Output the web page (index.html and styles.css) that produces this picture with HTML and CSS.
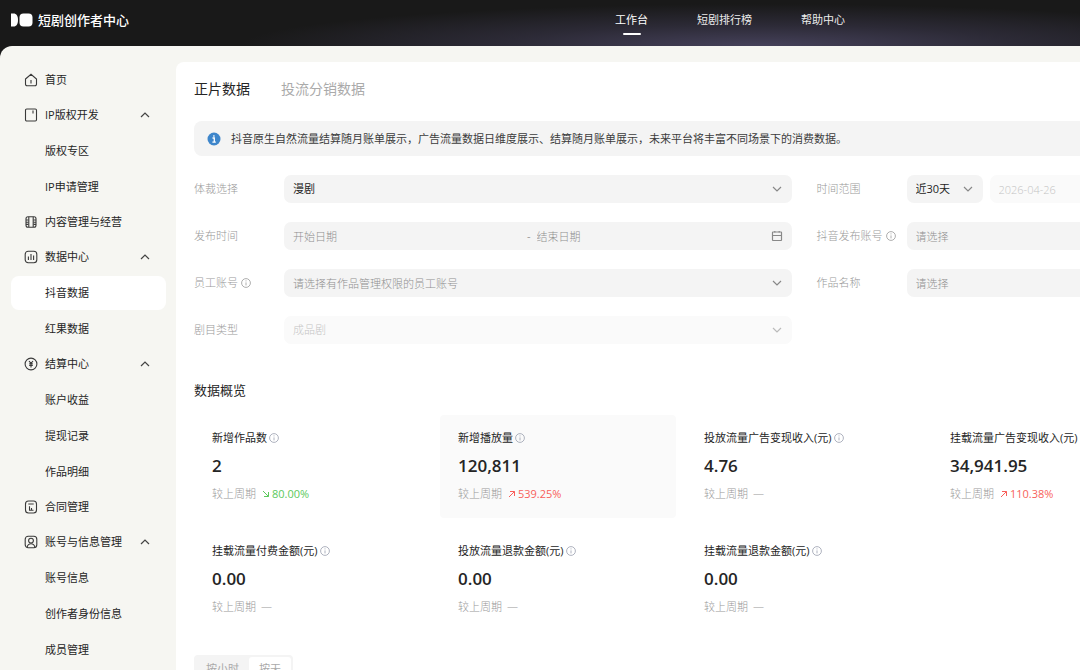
FILE: index.html
```html
<!DOCTYPE html>
<html lang="zh-CN">
<head>
<meta charset="utf-8">
<meta name="viewport" content="width=device-width, initial-scale=1">
<title>短剧创作者中心</title>
<link rel="stylesheet" href="styles.css">
</head>
<body>
<svg class="sprite" aria-hidden="true">
  <symbol id="up" viewBox="0 0 12 12"><path d="M2 8l4-4 4 4" /></symbol>
  <symbol id="down" viewBox="0 0 12 12"><path d="M2 4l4 4 4-4" /></symbol>
  <symbol id="info" viewBox="0 0 12 12"><circle cx="6" cy="6" r="4.4" /><path d="M6 5.4v3M6 3.4v1" /></symbol>
  <symbol id="rise" viewBox="0 0 10 10"><path d="M2 8l5.500-5.500M3 2.500h4.500V7" /></symbol>
  <symbol id="fall" viewBox="0 0 10 10"><path d="M2 2l5.500 5.500M7.500 3v4.500H3" /></symbol>
</svg>
<div class="page">
  <header class="topbar">
    <a class="brand" href="#">
      <svg class="brand-mark" viewBox="0 0 22 14" aria-hidden="true"><path d="M0 .5h2.5C5.500.5 7 3 7 7s-1.500 6.500-4.500 6.500H0z"/><rect x="8.500" y=".5" width="13" height="13" rx="4"/></svg>
      <span>短剧创作者中心</span>
    </a>
    <nav class="topnav" aria-label="主导航">
      <a class="topnav-link is-current" href="#">工作台</a>
      <a class="topnav-link" href="#">短剧排行榜</a>
      <a class="topnav-link" href="#">帮助中心</a>
    </nav>
  </header>
  <div class="shell">
    <nav class="sidebar" aria-label="侧边导航">
      <div class="group">
        <a class="item" href="#"><svg class="icon" viewBox="0 0 14 14"><path d="M1.500 6L7 1.300 12.500 6v5.200a1.500 1.500 0 0 1-1.500 1.500H3a1.500 1.500 0 0 1-1.500-1.500z"/><path d="M7 7v3.500"/></svg>首页</a>
      </div>
      <div class="group">
        <button class="item" type="button"><svg class="icon" viewBox="0 0 14 14"><rect x="1.500" y="1" width="11" height="12" rx="1.200"/><path d="M9 2.500V5.500"/></svg>IP版权开发<svg class="caret"><use href="#up"/></svg></button>
        <a class="item sub" href="#">版权专区</a>
        <a class="item sub" href="#">IP申请管理</a>
      </div>
      <div class="group">
        <a class="item" href="#"><svg class="icon" viewBox="0 0 14 14"><rect x="2" y="1.800" width="10" height="10.400" rx="2"/><path d="M4.800 2v10M9.200 2v10"/><path d="M2 5h2.500M2 7.200h2.500M2 9.400h2.500M9.500 5H12M9.500 7.200H12M9.500 9.400H12"/></svg>内容管理与经营</a>
      </div>
      <div class="group">
        <button class="item" type="button"><svg class="icon" viewBox="0 0 14 14"><rect x="1.200" y="1.200" width="11.600" height="11.600" rx="3"/><path d="M4.400 6.500V10M7 4v6M9.600 5.500V10"/></svg>数据中心<svg class="caret"><use href="#up"/></svg></button>
        <a class="item sub is-current" href="#">抖音数据</a>
        <a class="item sub" href="#">红果数据</a>
      </div>
      <div class="group">
        <button class="item" type="button"><svg class="icon" viewBox="0 0 14 14"><circle cx="7" cy="7" r="5.900"/><path d="M5 4l2 2.400L9 4M7 6.400v4M5.200 6.700h3.600M5.200 8.400h3.600"/></svg>结算中心<svg class="caret"><use href="#up"/></svg></button>
        <a class="item sub" href="#">账户收益</a>
        <a class="item sub" href="#">提现记录</a>
        <a class="item sub" href="#">作品明细</a>
      </div>
      <div class="group">
        <a class="item" href="#"><svg class="icon" viewBox="0 0 14 14"><rect x="1.500" y="1" width="11" height="12" rx="3"/><path d="M4.300 4h5.400M5.500 6.200v4h4M7.500 8v2"/></svg>合同管理</a>
      </div>
      <div class="group">
        <button class="item" type="button"><svg class="icon" viewBox="0 0 14 14"><rect x="1.200" y="1.200" width="11.600" height="11.600" rx="3"/><circle cx="7" cy="5.600" r="2.400"/><path d="M3.200 12c.5-2.200 2-3.300 3.800-3.300s3.300 1.100 3.800 3.300"/></svg>账号与信息管理<svg class="caret"><use href="#up"/></svg></button>
        <a class="item sub" href="#">账号信息</a>
        <a class="item sub" href="#">创作者身份信息</a>
        <a class="item sub" href="#">成员管理</a>
      </div>
    </nav>
    <main class="main">
      <div class="tabs">
        <button class="tab is-current" type="button">正片数据</button>
        <button class="tab" type="button">投流分销数据</button>
      </div>
      <p class="notice"><svg class="notice-icon" viewBox="0 0 14 14" aria-hidden="true"><circle cx="7" cy="7" r="6.500"/><path d="M5.500 6H7.300v4M5.400 10.200h3.400M6.900 3.200v1.500"/></svg>抖音原生自然流量结算随月账单展示，广告流量数据日维度展示、结算随月账单展示，未来平台将丰富不同场景下的消费数据。</p>

      <form class="filters">
        <div class="field">
          <label class="label" for="genre">体裁选择</label>
          <div class="control"><select class="input" id="genre"><option>漫剧</option></select><svg class="mark"><use href="#down"/></svg></div>
        </div>
        <div class="field">
          <label class="label" for="range">时间范围</label>
          <div class="pair">
            <div class="control control--short"><select class="input" id="range"><option>近30天</option></select><svg class="mark"><use href="#down"/></svg></div>
            <div class="control is-off"><input class="input" type="text" value="2026-04-26" aria-label="日期" disabled></div>
          </div>
        </div>
        <div class="field">
          <label class="label" for="start">发布时间</label>
          <div class="control">
            <input class="input" id="start" type="text" placeholder="开始日期"><span class="dash">-</span><input class="input input--end" type="text" placeholder="结束日期" aria-label="结束日期">
            <svg class="mark" viewBox="0 0 12 12"><rect x="1.500" y="2" width="9" height="8.500" rx=".5"/><path d="M1.500 5.500h9M3.800 1v1.500M8.200 1v1.500"/></svg>
          </div>
        </div>
        <div class="field">
          <label class="label" for="account">抖音发布账号<svg class="hint"><use href="#info"/></svg></label>
          <div class="control"><input class="input" id="account" type="text" placeholder="请选择"></div>
        </div>
        <div class="field">
          <label class="label" for="staff">员工账号<svg class="hint"><use href="#info"/></svg></label>
          <div class="control"><input class="input" id="staff" type="text" placeholder="请选择有作品管理权限的员工账号"><svg class="mark"><use href="#down"/></svg></div>
        </div>
        <div class="field">
          <label class="label" for="work">作品名称</label>
          <div class="control"><input class="input" id="work" type="text" placeholder="请选择"></div>
        </div>
        <div class="field">
          <label class="label" for="kind">剧目类型</label>
          <div class="control is-off"><select class="input" id="kind" disabled><option>成品剧</option></select><svg class="mark"><use href="#down"/></svg></div>
        </div>
      </form>

      <h2 class="heading">数据概览</h2>
      <section class="metrics">
        <article class="metric"><h3 class="name">新增作品数<svg class="hint"><use href="#info"/></svg></h3><p class="value">2</p><p class="delta">较上周期<span class="trend down"><svg class="arrow"><use href="#fall"/></svg>80.00%</span></p></article>
        <article class="metric is-active"><h3 class="name">新增播放量<svg class="hint"><use href="#info"/></svg></h3><p class="value">120,811</p><p class="delta">较上周期<span class="trend up"><svg class="arrow"><use href="#rise"/></svg>539.25%</span></p></article>
        <article class="metric"><h3 class="name">投放流量广告变现收入(元)<svg class="hint"><use href="#info"/></svg></h3><p class="value">4.76</p><p class="delta">较上周期<span>—</span></p></article>
        <article class="metric"><h3 class="name">挂载流量广告变现收入(元)<svg class="hint"><use href="#info"/></svg></h3><p class="value">34,941.95</p><p class="delta">较上周期<span class="trend up"><svg class="arrow"><use href="#rise"/></svg>110.38%</span></p></article>
        <article class="metric metric--first"><h3 class="name">挂载流量付费金额(元)<svg class="hint"><use href="#info"/></svg></h3><p class="value">0.00</p><p class="delta">较上周期<span>—</span></p></article>
        <article class="metric"><h3 class="name">投放流量退款金额(元)<svg class="hint"><use href="#info"/></svg></h3><p class="value">0.00</p><p class="delta">较上周期<span>—</span></p></article>
        <article class="metric"><h3 class="name">挂载流量退款金额(元)<svg class="hint"><use href="#info"/></svg></h3><p class="value">0.00</p><p class="delta">较上周期<span>—</span></p></article>
      </section>
      <div class="switch">
        <button class="switch-item" type="button">按小时</button>
        <button class="switch-item is-current" type="button">按天</button>
      </div>
    </main>
  </div>
</div>
</body>
</html>
```
FILE: styles.css
```css
* { box-sizing: border-box; }
body, h2, h3, p { margin: 0; }
body {
  height: 100vh;
  overflow: hidden;
  background: #191919;
  color: #252525;
  font: 400 11px/18px "Open Sans", "Noto Sans CJK SC", sans-serif;
}
a { color: inherit; text-decoration: none; }
button, input, select { font: inherit; color: inherit; border: 0; background: none; padding: 0; margin: 0; }
svg { flex: none; fill: none; stroke: currentColor; }
.sprite { position: absolute; width: 0; height: 0; }

/* The workspace keeps a desktop width; narrower windows show its left part. */
.page { min-width: 1460px; min-height: 100vh; display: flex; flex-direction: column; }

.topbar {
  display: grid;
  grid-template-columns: 1fr auto 1fr;
  align-items: start;
  height: 46px;
  padding: 0 11px;
  color: #fff;
  background: radial-gradient(ellipse 520px 42px at 760px 100%, #45415a, #2c2a36 50%, #191919) #191919;
}
.brand { display: flex; align-items: center; gap: 5px; height: 39px; font-size: 13px; font-weight: 500; }
.brand-mark { width: 22px; height: 14px; fill: #fff; stroke: none; }
.topnav { display: flex; gap: 49px; padding-top: 11px; }
.topnav-link { display: flex; flex-direction: column; align-items: center; gap: 4px; color: #ececec; }
.topnav-link.is-current { color: #fff; }
.topnav-link.is-current::after { content: ""; width: 18px; height: 2px; border-radius: 1px; background: #fff; }

.shell { flex: 1; display: flex; background: #f6f6f2; border-top-left-radius: 12px; }
.sidebar { width: 176px; flex: none; display: flex; flex-direction: column; gap: 1px; padding: 17px 10px 0 11px; }
.group { display: flex; flex-direction: column; gap: 2px; }
.item { display: flex; align-items: center; gap: 7px; height: 34px; padding: 0 15px 0 13px; border-radius: 8px; text-align: left; }
.item.sub { padding-left: 34px; }
.item.is-current { background: #fff; }
.icon { width: 14px; height: 14px; stroke-width: 1.1; color: #3a3a3a; }
.caret { width: 12px; height: 12px; margin-left: auto; stroke-width: 1.2; color: #444; }

.main { flex: 1; margin-top: 16px; padding: 16px 46px 0 18px; background: #fff; border-top-left-radius: 8px; }
.tabs { display: flex; gap: 31px; }
.tab { font-size: 14px; line-height: 22px; color: #aaa; }
.tab.is-current { color: #252525; }
.notice { display: flex; align-items: center; gap: 10px; margin-top: 21px; padding: 8px 13px; min-height: 35px; border-radius: 8px; background: #f4f4f4; color: #3c3c3c; }
.notice-icon { width: 14px; height: 14px; fill: #3e86cb; stroke: none; }
.notice-icon path { fill: none; stroke: #fff; stroke-width: 1.3; }

.filters { display: grid; grid-template-columns: 1fr 1fr; gap: 19px 25px; margin-top: 19px; }
.field { display: grid; grid-template-columns: 90px 1fr; align-items: center; }
.label { display: flex; align-items: center; gap: 2px; color: #999; font-weight: 300; }
.hint { width: 12px; height: 12px; stroke-width: .8; color: #999; }
.pair { display: flex; gap: 7px; }
.pair .control { flex: 1; }
.pair .control--short { flex: none; width: 76px; }
.control { display: flex; align-items: center; height: 28px; padding: 0 9px; border-radius: 7px; background: #f4f4f4; }
.control .input { flex: 1; min-width: 0; width: 0; height: 28px; appearance: none; outline: 0; }
.control .input--end { padding-left: 6px; }
.input::placeholder { color: #909090; opacity: 1; font-weight: 300; }
.dash { color: #999; }
.mark { width: 12px; height: 12px; color: #888; stroke-width: 1.2; }
.is-off { background: #fafafa; }
.is-off .input { color: #c4c4c4; opacity: 1; font-weight: 300; }
.is-off .mark { color: #bbb; }

.heading { margin-top: 36px; font-size: 13px; line-height: 20px; font-weight: 400; }
.metrics { display: grid; grid-template-columns: repeat(5, 1fr); gap: 10px; margin-top: 15px; }
.metric { padding: 14px 0 15px 18px; border-radius: 4px; white-space: nowrap; }
.metric--first { grid-column-start: 1; }
.metric.is-active { background: #fafafa; }
.name { display: flex; align-items: center; gap: 1px; font-size: 11px; font-weight: 400; }
.name .hint { color: #9a9fae; }
.value { margin: 7px 0; font-size: 17px; line-height: 24px; font-weight: 600; }
.delta { display: flex; gap: 5px; color: #999; font-weight: 300; }
.trend { display: flex; align-items: center; gap: 1px; font-weight: 400; }
.arrow { width: 10px; height: 10px; }
.trend.down { color: #5cc95c; }
.trend.up { color: #f85f5a; }

.switch { display: inline-flex; margin-top: 24px; padding: 2px; border-radius: 4px; background: #f4f4f4; color: #aaa; }
.switch-item { height: 24px; padding: 0 10px; border-radius: 3px; }
.switch-item.is-current { background: #fff; }
```
